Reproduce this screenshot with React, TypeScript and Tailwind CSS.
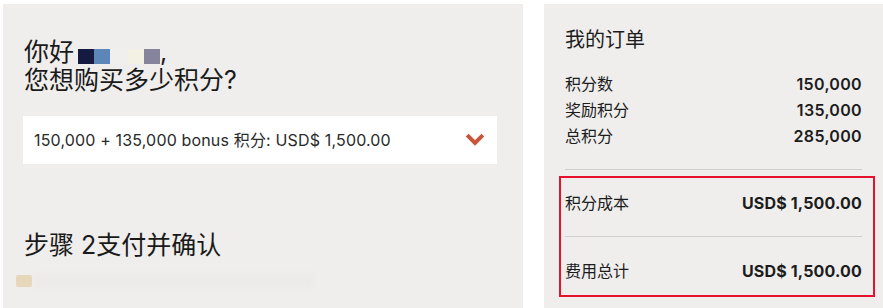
import React from "react";

const FONT = { fontFamily: 'Inter, "Noto Sans CJK SC", sans-serif' };

function Row({ label, value }: { label: string; value: string }) {
  return (
    <div className="flex items-center justify-between h-[26px]">
      <span className="text-[16px] text-[#1c1c1c]">{label}</span>
      <span className="text-[16px] font-semibold tracking-[0.02em] text-[#1c1c1c]">{value}</span>
    </div>
  );
}

export default function App() {
  return (
    <div className="flex h-[308px] w-[883px] overflow-hidden bg-white pt-[4px] pl-[3px] gap-[21px]" style={FONT}>
      {/* left: points selection */}
      <section className="w-[520px] shrink-0 bg-[#efeeec] pl-[21px] pt-[34px]">
        <h1 className="text-[25px] leading-[28px] text-[#1a1a1a]">
          <span className="inline-flex items-end align-baseline">
            你好
            <span className="ml-[4px] inline-flex h-[15px] translate-y-[-2px]">
              <span className="w-[16px] bg-[#141a40]" />
              <span className="w-[16px] bg-[#5b86b7]" />
              <span className="w-[18px] bg-[#f0efee]" />
              <span className="w-[16px] bg-[#f3f1e4]" />
              <span className="w-[16px] bg-[#86849c]" />
            </span>
            ,
          </span>
          <br />
          您想购买多少积分?
        </h1>

        <div className="mt-[22px] mr-[26px] -ml-[1px] flex h-[48px] items-center justify-between bg-white pl-[11px] pr-[12px]">
          <span className="text-[16px] tracking-[0.01em] text-[#2a2a2a]">150,000 + 135,000 bonus 积分: USD$ 1,500.00</span>
          <svg width="18" height="14" viewBox="0 0 18 14" className="mr-[1px]">
            <path d="M2.5 3.5 L9 10 L15.5 3.5" fill="none" stroke="#c9553b" strokeWidth="4" strokeLinecap="square" />
          </svg>
        </div>

        <h2 className="mt-[66px] text-[25px] leading-[30px] text-[#1a1a1a]">步骤 2支付并确认</h2>

        <div className="mt-[14px] -ml-[8px] flex items-center gap-[2px]">
          <span className="h-[12px] w-[16px] rounded-[2px] bg-[#e6d6ba] blur-[0.5px]" />
          <span className="h-[14px] w-[280px] rounded bg-[#ecebe9] blur-[2px]" />
        </div>
      </section>

      {/* right: order summary */}
      <aside className="flex-1 bg-[#efeeec] pl-[21px] pr-[21px] pt-[23px]">
        <h3 className="text-[20px] leading-[26px] text-[#1c1c1c]">我的订单</h3>
        <div className="mt-[18px]">
          <Row label="积分数" value="150,000" />
          <Row label="奖励积分" value="135,000" />
          <Row label="总积分" value="285,000" />
        </div>
        <div className="mt-[20px] h-px bg-[#cfcecc]" />
        <div className="mt-[6px] -ml-[6px] -mr-[13px] border-2 border-[#e8112d] pl-[4px] pr-[11px]">
          <div className="flex items-center justify-between h-[50px]">
            <span className="text-[16px] text-[#1c1c1c]">积分成本</span>
            <span className="text-[16px] font-bold tracking-[0.01em] text-[#1c1c1c]">USD$ 1,500.00</span>
          </div>
          <div className="mt-[8px] h-px bg-[#cfcecc]" />
          <div className="flex items-center justify-between h-[58px] pt-[10px]">
            <span className="text-[16px] text-[#1c1c1c]">费用总计</span>
            <span className="text-[16px] font-bold tracking-[0.01em] text-[#1c1c1c]">USD$ 1,500.00</span>
          </div>
        </div>
      </aside>
    </div>
  );
}
